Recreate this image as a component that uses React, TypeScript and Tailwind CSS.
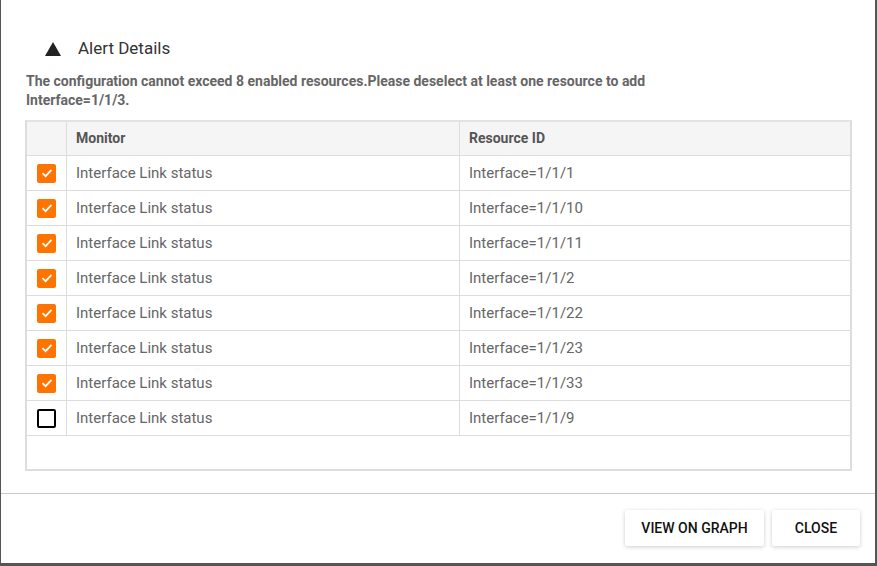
const rows = [
  ["Interface=1/1/1", true],
  ["Interface=1/1/10", true],
  ["Interface=1/1/11", true],
  ["Interface=1/1/2", true],
  ["Interface=1/1/22", true],
  ["Interface=1/1/23", true],
  ["Interface=1/1/33", true],
  ["Interface=1/1/9", false],
] as const;

export default function App() {
  return (
    <div className="w-[877px] h-[566px] bg-[#555] pl-px pr-[2px] pb-[3px] [font-family:Roboto,sans-serif]">
      <div className="bg-white h-full flex flex-col">
        <div className="flex items-center h-[30px] mt-[34px] pl-[44px]">
          <svg width="16" height="14" viewBox="0 0 16 14"><path d="M8 0 L16 14 L0 14 Z" fill="#222" /></svg>
          <span className="ml-[17px] text-[17px] text-[#333]">Alert Details</span>
        </div>
        <div className="mt-[8px] pl-[25px] pr-[20px] text-[14px] font-bold text-[#666] leading-[19px]">
          The configuration cannot exceed 8 enabled resources.Please deselect at least one resource to add<br />Interface=1/1/3.
        </div>
        <div className="ml-[24px] mt-[10px] w-[827px] border-2 border-[#ddd] border-t-[#e3e3e3]">
          <div className="flex h-[34px] bg-[#f5f5f5] border-b border-[#ddd] text-[14px] font-bold text-[#555]">
            <div className="w-[40px] border-r border-[#ddd]" />
            <div className="w-[393px] border-r border-[#ddd] flex items-center pl-[9px]">Monitor</div>
            <div className="flex-1 flex items-center pl-[9px]">Resource ID</div>
          </div>
          {rows.map(([id, on], i) => (
            <div key={i} className="flex h-[35px] border-b border-[#ddd] text-[15px] text-[#666]">
              <div className="w-[40px] border-r border-[#ddd] flex items-center justify-center">
                {on ? (
                  <div className="w-[19px] h-[19px] bg-[#ff7300] rounded-[2px] flex items-center justify-center">
                    <svg width="14" height="14" viewBox="0 0 14 14"><path d="M2.5 7.2 L5.6 10.2 L11.5 3.8" fill="none" stroke="white" strokeWidth="1.8" /></svg>
                  </div>
                ) : (
                  <div className="w-[19px] h-[19px] border-2 border-black rounded-[2px]" />
                )}
              </div>
              <div className="w-[393px] border-r border-[#ddd] flex items-center pl-[9px]">Interface Link status</div>
              <div className="flex-1 flex items-center pl-[9px]">{id}</div>
            </div>
          ))}
          <div className="h-[33px]" />
        </div>
        <div className="mt-[22px] border-t border-[#c8c8c8] flex justify-end gap-[8px] pr-[15px] pt-[16px]">
          <button className="h-[36px] w-[139px] bg-white shadow-[0_1px_4px_rgba(0,0,0,0.2)] rounded-[2px] text-[14px] font-medium text-[#111]">VIEW ON GRAPH</button>
          <button className="h-[36px] w-[88px] bg-white shadow-[0_1px_4px_rgba(0,0,0,0.2)] rounded-[2px] text-[14px] font-medium text-[#111]">CLOSE</button>
        </div>
      </div>
    </div>
  );
}
